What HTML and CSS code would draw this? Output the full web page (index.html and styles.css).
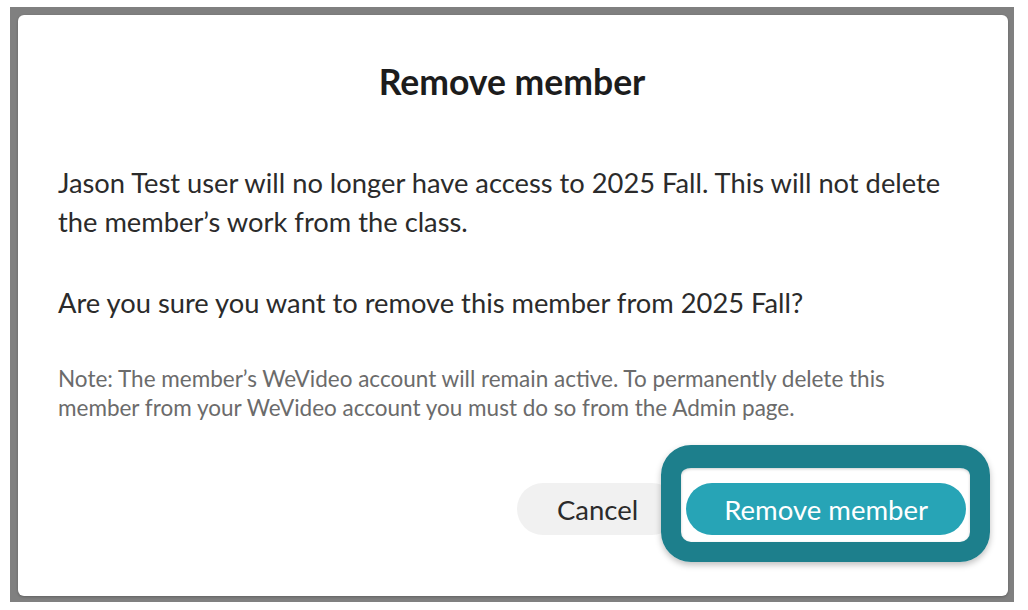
FILE: index.html
```
<!doctype html>
<html>
<head>
<meta charset="utf-8">
<link rel="stylesheet" href="styles.css">
</head>
<body>
<div class="backdrop">
  <div class="modal">
    <h2 class="modal-title">Remove member</h2>
    <div class="modal-body">
      <p class="lead">Jason Test user will no longer have access to 2025 Fall. This will not delete the member’s work from the class.</p>
      <p class="lead">Are you sure you want to remove this member from 2025 Fall?</p>
      <p class="note">Note: The member’s WeVideo account will remain active. To permanently delete this member from your WeVideo account you must do so from the Admin page.</p>
    </div>
    <div class="modal-footer">
      <button class="btn btn-cancel">Cancel</button>
      <div class="focus-wrap">
        <button class="btn btn-primary">Remove member</button>
        <span class="highlight"></span>
      </div>
    </div>
  </div>
</div>
</body>
</html>
```

FILE: styles.css
```
body {
    margin: 0;
    background: #fff;
    font-family: Lato, "Open Sans", sans-serif;
}
.backdrop {
    margin: 7px 14px 0 10px;
    height: 581px;
    padding: 8px 6px 6px 8px;
    background: #808080;
    display: flex;
}
.modal {
    flex: 1;
    background: #fff;
    border-radius: 6px;
    box-shadow: 0 1px 3px rgba(0, 0, 0, 0.25);
    padding: 47px 42px 0 40px;
    display: flex;
    flex-direction: column;
}
.modal-title {
    margin: 0;
    text-align: center;
    font-size: 35.5px;
    line-height: 40px;
    font-weight: 700;
    color: #1c1c1c;
}
.modal-body {
    max-width: 890px;
    margin-top: 61px;
}
.lead {
    margin: 0 0 42px 0;
    font-size: 27.3px;
    line-height: 39px;
    color: #2b2b2b;
}
.note {
    margin: 3px 0 0 0;
    font-size: 22.5px;
    line-height: 29px;
    color: #6b6b6b;
}
.modal-footer {
    margin-top: 61px;
    display: flex;
    justify-content: flex-end;
    gap: 8px;
}
.btn {
    height: 52px;
    border: 0;
    border-radius: 26px;
    font-family: Lato, "Open Sans", sans-serif;
    font-size: 27.5px;
    padding: 0 40px;
}
.btn-cancel {
    background: #f1f1f1;
    color: #2b2b2b;
}
.btn-primary {
    background: #27a4b6;
    color: #fff;
    padding: 0 38px;
}
.focus-wrap {
    position: relative;
}
.highlight {
    position: absolute;
    left: -25px;
    top: -38px;
    right: -24px;
    bottom: -27px;
    border: 20px solid #1d7f8c;
    border-top-width: 23px;
    border-radius: 30px;
    box-shadow: 0 3px 6px rgba(0, 0, 0, 0.25), inset 0 1px 3px rgba(0, 0, 0, 0.2);
}
```
